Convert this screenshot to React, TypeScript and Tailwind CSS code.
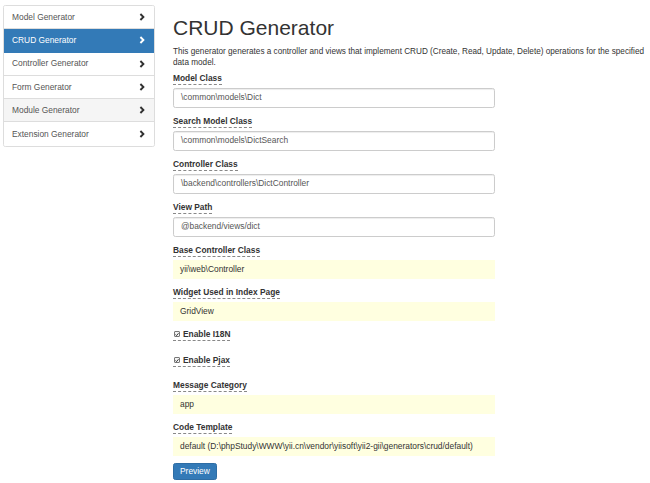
const generators = [
  "Model Generator",
  "CRUD Generator",
  "Controller Generator",
  "Form Generator",
  "Module Generator",
  "Extension Generator",
];

function Chevron({ active }: { active: boolean }) {
  return (
    <svg width="6" height="8" viewBox="0 0 6 8" className={active ? "text-white" : "text-[#333]"}>
      <polyline points="1.4,1 4.4,4 1.4,7" fill="none" stroke="currentColor" strokeWidth="1.9" />
    </svg>
  );
}

function Sidebar() {
  return (
    <div className="w-[152px] border border-[#ddd] rounded-[2.4px] overflow-hidden bg-white">
      {generators.map((name, i) => {
        const active = name === "CRUD Generator";
        const hover = name === "Module Generator";
        return (
          <div
            key={name}
            className={`h-[23.3px] flex items-center justify-between pl-[8px] pr-[9px] ${
              i < generators.length - 1 ? "border-b" : ""
            } ${
              active
                ? "bg-[#337ab7] border-[#337ab7] text-white"
                : hover
                ? "bg-[#f5f5f5] border-[#ddd] text-[#555]"
                : "bg-white border-[#ddd] text-[#555]"
            }`}
          >
            <span>{name}</span>
            <Chevron active={active} />
          </div>
        );
      })}
    </div>
  );
}

function FieldLabel({ children }: { children: React.ReactNode }) {
  return (
    <div className="h-[12px] mb-[4px]">
      <span className="inline-block leading-[11px] font-bold text-[#333] border-b border-dashed border-[#888]">
        {children}
      </span>
    </div>
  );
}

function TextField({ label, value }: { label: string; value: string }) {
  return (
    <div className="mb-[7px]">
      <FieldLabel>{label}</FieldLabel>
      <div className="h-[20px] w-[322px] flex items-center px-[7px] border border-[#ccc] rounded-[2.4px] shadow-[inset_0_1px_1px_rgba(0,0,0,0.075)] text-[#555]">
        {value}
      </div>
    </div>
  );
}

function StickyField({ label, value }: { label: string; value: string }) {
  return (
    <div className="mb-[7px]">
      <FieldLabel>{label}</FieldLabel>
      <div className="h-[19px] w-[322px] flex items-center px-[7px] bg-[#ffffe0] text-[#333] whitespace-pre">
        {value}
      </div>
    </div>
  );
}

function CheckField({ label, className }: { label: string; className: string }) {
  return (
    <div className={className}>
      <span className="inline-flex items-center gap-[3px] leading-[11px] font-bold text-[#333] border-b border-dashed border-[#888] pl-[1px]">
        <span className="w-[6px] h-[6px] border border-[#777] bg-[#f4f4f4] rounded-[1px] flex items-center justify-center">
          <svg width="5" height="5" viewBox="0 0 5 5">
            <polyline points="0.6,2.6 1.9,3.9 4.4,0.9" fill="none" stroke="#222" strokeWidth="1.1" />
          </svg>
        </span>
        <span>{label}</span>
      </span>
    </div>
  );
}

export default function App() {
  return (
    <div
      className="w-[650px] h-[483px] bg-white overflow-hidden flex text-[8.4px]"
      style={{ fontFamily: '"Liberation Sans", Arial, sans-serif' }}
    >
      <div className="pl-[3px] pt-[5px]">
        <Sidebar />
      </div>

      <div className="ml-[18px] w-[477px] pt-[16px]">
        <h1 className="text-[21px] leading-[24px] text-[#333]">CRUD Generator</h1>
        <p className="mt-[6px] leading-[11px] text-[8.2px] text-[#333]">
          This generator generates a controller and views that implement CRUD (Create, Read, Update, Delete) operations
          for the specified data model.
        </p>

        <div className="mt-[3.5px]">
          <TextField label="Model Class" value="\common\models\Dict" />
          <TextField label="Search Model Class" value="\common\models\DictSearch" />
          <TextField label="Controller Class" value="\backend\controllers\DictController" />
          <TextField label="View Path" value="@backend/views/dict" />
          <StickyField label="Base Controller Class" value="yii\web\Controller" />
          <StickyField label="Widget Used in Index Page" value="GridView" />
          <CheckField label="Enable I18N" className="mb-[13px]" />
          <CheckField label="Enable Pjax" className="mb-[12px]" />
          <StickyField label="Message Category" value="app" />
          <StickyField
            label="Code Template"
            value="default (D:\phpStudy\WWW\yii.cn\vendor\yiisoft\yii2-gii\generators\crud/default)"
          />
          <button className="h-[17px] px-[6px] bg-[#337ab7] border border-[#2e6da4] rounded-[2.4px] text-white">
            Preview
          </button>
        </div>
      </div>
    </div>
  );
}
